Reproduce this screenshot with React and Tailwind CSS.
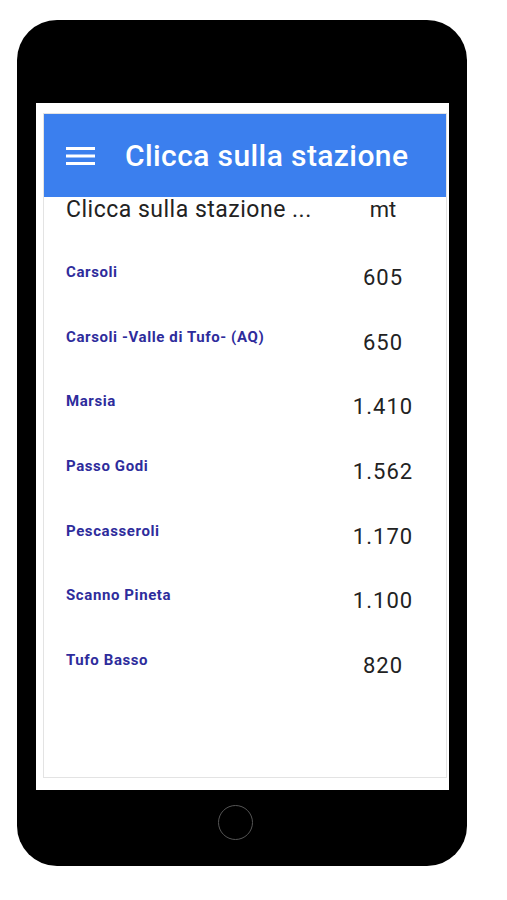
const stazioni = [
  { nome: 'Carsoli', mt: '605' },
  { nome: 'Carsoli -Valle di Tufo- (AQ)', mt: '650' },
  { nome: 'Marsia', mt: '1.410' },
  { nome: 'Passo Godi', mt: '1.562' },
  { nome: 'Pescasseroli', mt: '1.170' },
  { nome: 'Scanno Pineta', mt: '1.100' },
  { nome: 'Tufo Basso', mt: '820' },
];

export default function App() {
  return (
    <div className="min-h-[900px] w-[507px] bg-white pl-[17px] pt-[20px] font-['Roboto',_sans-serif]">
      {/* ── phone body ── */}
      <div className="flex h-[846px] w-[450px] flex-col rounded-[40px] bg-black pl-[19px] pr-[18px] pt-[83px]">
        {/* ── screen ── */}
        <div className="h-[687px] bg-white pb-[12px] pl-[7px] pr-[2px] pt-[10px]">
          <div className="flex h-full flex-col border border-[#e3e3e3]">
            <div className="flex h-[83px] items-center bg-[#3b7fee] pl-[22px]">
              <svg width="29" height="22" viewBox="0 0 29 22" className="mr-[30px] shrink-0">
                <rect x="0" y="2" width="29" height="3" fill="#fff" />
                <rect x="0" y="9.5" width="29" height="3" fill="#fff" />
                <rect x="0" y="17" width="29" height="3" fill="#fff" />
              </svg>
              <span className="text-[30px] font-medium leading-none tracking-[0.4px] text-white">Clicca sulla stazione</span>
            </div>

            {/* ── column heads ── */}
            <div className="flex h-[65px] items-start pl-[22px] pr-[23px]">
              <span className="flex-1 text-[23px] leading-[26px] tracking-[0.5px] text-[#222]">Clicca sulla stazione ...</span>
              <span className="w-[80px] text-center text-[22px] leading-[26px] text-[#222]">mt</span>
            </div>

            {/* ── rows ── */}
            {stazioni.map((s) => (
              <div key={s.nome} className="flex h-[64.7px] items-start pl-[22px] pr-[23px]">
                <span className="flex-1 text-[15px] font-bold leading-[20px] tracking-[0.6px] text-[#2e2c9c]">{s.nome}</span>
                <span className="mt-[2px] w-[80px] text-center text-[22px] leading-[28px] tracking-[1px] text-[#222]">{s.mt}</span>
              </div>
            ))}
          </div>
        </div>

        {/* ── home button ── */}
        <div className="flex flex-1 items-center pb-[12px] pl-[182px]">
          <div className="h-[35px] w-[35px] rounded-full border-[1.5px] border-[#555]" />
        </div>
      </div>
    </div>
  );
}
